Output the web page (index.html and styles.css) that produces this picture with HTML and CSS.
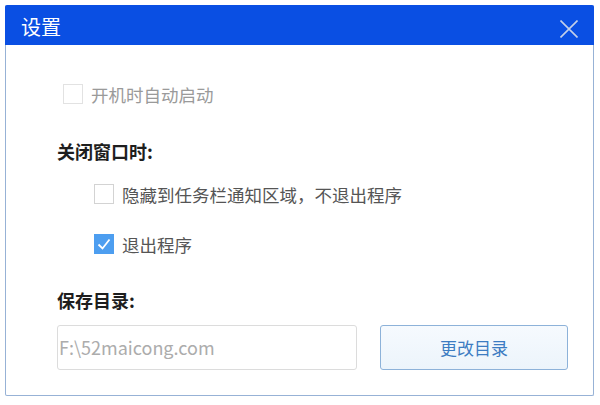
FILE: index.html
```html
<!DOCTYPE html>
<html lang="zh-CN">
<head>
    <meta charset="UTF-8">
    <meta name="viewport" content="width=device-width, initial-scale=1.0">
    <title>设置</title>
    <link rel="stylesheet" href="styles.css">
</head>
<body>
    <div class="dialog">
        <div class="titlebar">
            <span class="title">设置</span>
            <svg class="close" width="18" height="18" viewBox="0 0 18 18">
                <path d="M0.5 0.5 L17.5 17.5 M17.5 0.5 L0.5 17.5" stroke="#c3cfe9" stroke-width="1.6" fill="none"/>
            </svg>
        </div>

        <div class="content">
            <label class="option option-disabled row-first">
                <span class="box"></span>
                <span>开机时自动启动</span>
            </label>

            <div class="heading heading-close">关闭窗口时:</div>

            <label class="option option-sub row-hide">
                <span class="box"></span>
                <span>隐藏到任务栏通知区域，不退出程序</span>
            </label>

            <label class="option option-sub row-exit">
                <span class="box box-checked">
                    <svg width="20" height="20" viewBox="0 0 20 20">
                        <path d="M4.5 10.5 L8.5 14.5 L15.5 5.5" stroke="#fff" stroke-width="1.8" fill="none"/>
                    </svg>
                </span>
                <span>退出程序</span>
            </label>

            <div class="heading heading-save">保存目录:</div>

            <div class="path-row">
                <div class="path-input">F:\52maicong.com</div>
                <button class="change-btn">更改目录</button>
            </div>
        </div>
    </div>
</body>
</html>
```

FILE: styles.css
```css
body {
    margin: 0;
    background-color: #fff;
    font-family: "Noto Sans CJK SC", "Noto Sans", sans-serif;
}

.dialog {
    margin: 5px 0 0 5px;
    width: 589px;
    height: 391px;
    box-sizing: border-box;
    border: 1px solid #97b2d6;
    border-top: none;
    border-radius: 2px;
    background-color: #fff;
}

.titlebar {
    height: 40px;
    margin: 0 -1px;
    background-color: #0a4fe3;
    display: flex;
    align-items: center;
    justify-content: space-between;
    padding: 0 16px 0 16px;
    border-radius: 2px 2px 0 0;
}

.title {
    color: #fff;
    font-size: 20px;
    line-height: 24px;
    margin-top: 3px;
}

.close {
    margin-top: 8px;
}

.content {
    padding-left: 51px;
}

.option {
    display: flex;
    align-items: center;
    height: 24px;
    font-size: 17.5px;
    color: #555;
}

.option .box {
    width: 18px;
    height: 18px;
    border: 1px solid #d3d3d3;
    margin-right: 8px;
    box-sizing: content-box;
    flex-shrink: 0;
}

.option-disabled {
    color: #9a9a9a;
}

.option-disabled .box {
    border-color: #e2e2e2;
}

.option-sub {
    padding-left: 37px;
}

.box-checked {
    background-color: #4d9ef0;
    border-color: #4d9ef0 !important;
}

.box-checked svg {
    display: block;
    margin: -1px;
}

.row-first {
    margin-top: 37px;
    padding-left: 6px;
}

.heading {
    height: 24px;
    line-height: 24px;
    font-size: 18px;
    font-weight: bold;
    color: #1e1e1e;
}

.heading-close {
    margin-top: 33px;
}

.row-hide {
    margin-top: 19px;
}

.row-exit {
    margin-top: 26px;
}

.heading-save {
    margin-top: 32px;
}

.path-row {
    display: flex;
    margin-top: 13px;
}

.path-input {
    width: 300px;
    height: 45px;
    box-sizing: border-box;
    border: 1px solid #dcdcdc;
    border-radius: 3px;
    padding-left: 1px;
    font-size: 18px;
    line-height: 43px;
    color: #acacac;
}

.change-btn {
    width: 188px;
    height: 45px;
    margin-left: 23px;
    border: 1px solid #8db2d9;
    border-radius: 3px;
    background: linear-gradient(#f6fafe, #ecf4fb);
    color: #3c7cc2;
    font-family: "Noto Sans CJK SC", sans-serif;
    font-size: 17px;
    padding: 0;
}
```
